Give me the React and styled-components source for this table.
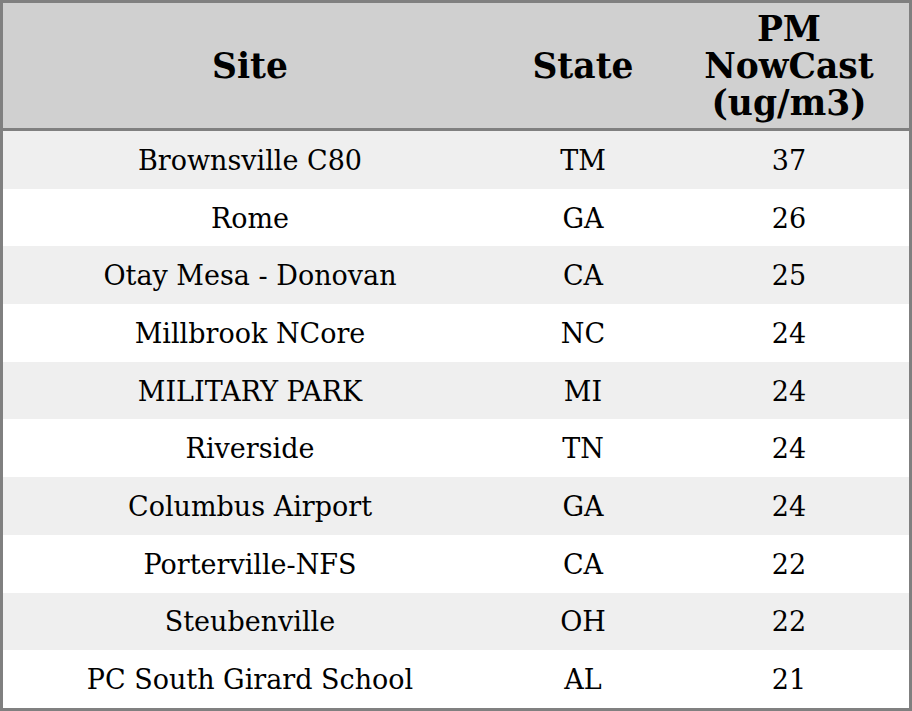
import styled, { createGlobalStyle } from "styled-components";

const GlobalStyle = createGlobalStyle`
    html, body {
        margin: 0;
        padding: 0;
        background: #ffffff;
    }
`;

const Table = styled.table`
    width: 912px;
    height: 711px;
    box-sizing: border-box;
    border: 3px solid #808080;
    border-spacing: 0;
    table-layout: fixed;
    font-family: "DejaVu Serif", serif;
    color: #000;
`;

const HeadCell = styled.th`
    height: 123px;
    padding: 2px 0 0 0;
    background-color: #d0d0d0;
    border-bottom: 3px solid #808080;
    font-size: 34.5px;
    font-weight: bold;
    line-height: 37px;
    text-align: center;
    vertical-align: middle;
`;

const Row = styled.tr`
    height: 57.7px;
    background-color: ${props => (props.$striped ? "#efefef" : "#ffffff")};
`;

const Cell = styled.td`
    padding: 1px 0 0 0;
    font-size: 27px;
    text-align: center;
    vertical-align: middle;
`;

const rows = [
    ["Brownsville C80", "TM", 37],
    ["Rome", "GA", 26],
    ["Otay Mesa - Donovan", "CA", 25],
    ["Millbrook NCore", "NC", 24],
    ["MILITARY PARK", "MI", 24],
    ["Riverside", "TN", 24],
    ["Columbus Airport", "GA", 24],
    ["Porterville-NFS", "CA", 22],
    ["Steubenville", "OH", 22],
    ["PC South Girard School", "AL", 21],
];

export default function App() {
    return (
        <>
            <GlobalStyle />
            <Table>
                <colgroup>
                    <col style={{ width: 494 }} />
                    <col style={{ width: 172 }} />
                    <col style={{ width: 240 }} />
                </colgroup>
                <thead>
                    <tr>
                        <HeadCell>Site</HeadCell>
                        <HeadCell>State</HeadCell>
                        <HeadCell>
                            PM
                            <br />
                            NowCast
                            <br />
                            (ug/m3)
                        </HeadCell>
                    </tr>
                </thead>
                <tbody>
                    {rows.map(([site, state, value], i) => (
                        <Row key={site} $striped={i % 2 === 0}>
                            <Cell>{site}</Cell>
                            <Cell>{state}</Cell>
                            <Cell>{value}</Cell>
                        </Row>
                    ))}
                </tbody>
            </Table>
        </>
    );
}
